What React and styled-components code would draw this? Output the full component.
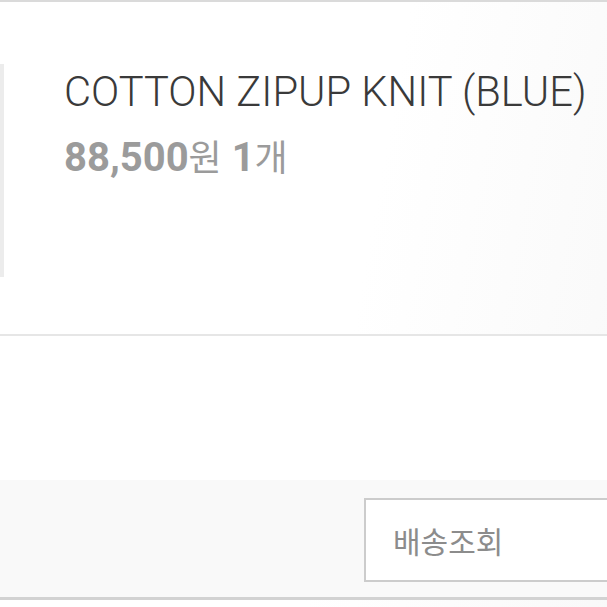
import styled, { createGlobalStyle } from 'styled-components';

const GlobalStyle = createGlobalStyle`
  html, body {
    margin: 0;
    padding: 0;
    background: #ffffff;
    overflow: hidden;
  }
  body {
    font-family: 'Roboto', 'Noto Sans CJK KR', sans-serif;
  }
`;

const Page = styled.div`
  width: 640px;
  height: 607px;
  display: flex;
  flex-direction: column;
  background: linear-gradient(100deg, #ffffff 55%, #f8f8f8 100%);
  border-top: 2px solid #dadada;
  box-sizing: border-box;
`;

const ItemRow = styled.div`
  display: flex;
  align-items: flex-start;
  padding-top: 62px;
  height: 334px;
  flex-shrink: 0;
  box-sizing: border-box;
  border-bottom: 2px solid #e6e6e6;
`;

const Thumb = styled.div`
  width: 4px;
  height: 213px;
  background: #ececec;
  flex-shrink: 0;
`;

const Info = styled.div`
  margin-left: 60px;
  display: flex;
  flex-direction: column;
  gap: 16px;
  padding-top: 2px;
`;

const Title = styled.div`
  font-family: 'Roboto', sans-serif;
  font-weight: 300;
  font-size: 41.7px;
  line-height: 52px;
  color: #3a3a3a;
  white-space: nowrap;
`;

const Price = styled.div`
  font-size: 40px;
  line-height: 1.2;
  color: #9b9b9b;
  white-space: nowrap;
`;

const Num = styled.span`
  font-family: 'Roboto', sans-serif;
  font-weight: 700;
`;

const Unit = styled.span`
  font-family: 'Noto Sans CJK KR', sans-serif;
  font-weight: 400;
  font-size: 36px;
`;

const Spacer = styled.div`
  height: 144px;
  flex-shrink: 0;
  background: #ffffff;
`;

const Footer = styled.div`
  flex: 1;
  display: flex;
  justify-content: flex-end;
  align-items: flex-start;
  padding: 18px 16px 0 0;
  background: #f9f9f9;
  border-bottom: 3px solid #d2d2d2;
  margin-bottom: 7px;
`;

const Button = styled.button`
  width: 260px;
  height: 84px;
  background: #ffffff;
  border: 2px solid #cccccc;
  box-sizing: border-box;
  text-align: left;
  padding: 0 0 0 27px;
  font-family: 'Noto Sans CJK KR', sans-serif;
  font-size: 30px;
  color: #8c8c8c;
  cursor: pointer;
`;

export default function App() {
  return (
    <>
      <GlobalStyle />
      <Page>
        <ItemRow>
          <Thumb />
          <Info>
            <Title>COTTON ZIPUP KNIT (BLUE)</Title>
            <Price>
              <Num>88,500</Num>
              <Unit>원</Unit> <Num>1</Num>
              <Unit>개</Unit>
            </Price>
          </Info>
        </ItemRow>
        <Spacer />
        <Footer>
          <Button>배송조회</Button>
        </Footer>
      </Page>
    </>
  );
}
